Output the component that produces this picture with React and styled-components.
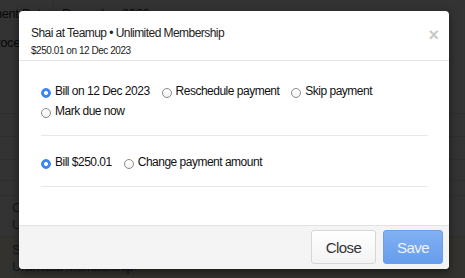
import React from "react";
import styled, { createGlobalStyle } from "styled-components";

const Global = createGlobalStyle`
  html, body { margin: 0; padding: 0; }
  body {
    font-family: "Liberation Sans", Arial, sans-serif;
    background: #fff;
    width: 465px;
    height: 278px;
    overflow: hidden;
  }
`;

const Page = styled.div`
  width: 465px;
  height: 278px;
  position: relative;
  overflow: hidden;
  color: #333;
  font-size: 13px;
  letter-spacing: -0.4px;
`;

const BgRow = styled.div`
  display: flex;
  align-items: center;
  height: ${(p) => p.h}px;
  border-bottom: 1px solid ${(p) => (p.line ? "#e6e6e6" : "transparent")};
  background: ${(p) => p.bg || "transparent"};
  white-space: nowrap;
  overflow: hidden;
`;

const BgCell = styled.div`
  flex: none;
  width: ${(p) => p.w}px;
  text-indent: ${(p) => p.indent || 0}px;
  border-right: ${(p) => (p.divide ? "1px solid #e6e6e6" : "none")};
  align-self: stretch;
  display: flex;
  align-items: ${(p) => (p.top ? "flex-start" : "center")};
  padding-top: ${(p) => (p.top ? 8 : 0)}px;
  padding-left: ${(p) => p.pad || 0}px;
`;

const BgStack = styled.div`
  display: flex;
  flex-direction: column;
  justify-content: center;
  gap: 2px;
  padding-left: 12px;
  align-self: stretch;
  color: #337ab7;
`;

const Backdrop = styled.div`
  position: absolute;
  inset: 0;
  background: rgba(0, 0, 0, 0.8);
`;

const Modal = styled.div`
  position: absolute;
  left: 19px;
  top: 11px;
  width: 430px;
  height: 258px;
  background: #fff;
  border-radius: 4px;
  box-shadow: 0 3px 9px rgba(0, 0, 0, 0.5);
  display: flex;
  flex-direction: column;
  overflow: hidden;
`;

const Header = styled.div`
  height: 50px;
  box-sizing: border-box;
  border-bottom: 1px solid #e5e5e5;
  padding: 14px 12px 0 12px;
  display: flex;
  justify-content: space-between;
  align-items: flex-start;
`;

const Titles = styled.div`
  display: flex;
  flex-direction: column;
`;

const Title = styled.div`
  font-size: 12px;
  letter-spacing: -0.55px;
  line-height: 17px;
  color: #222;
`;

const Sub = styled.div`
  font-size: 10px;
  letter-spacing: -0.45px;
  line-height: 15px;
  margin-top: 1px;
  color: #222;
`;

const CloseX = styled.span`
  font-size: 18px;
  font-weight: bold;
  letter-spacing: 0;
  line-height: 1;
  color: #c8c8c8;
  margin-top: 1px;
  margin-right: -2px;
`;

const Body = styled.div`
  flex: 1;
  padding: 20px 21px 0 22px;
`;

const Section = styled.div`
  display: flex;
  flex-wrap: wrap;
  column-gap: 12px;
  padding: ${(p) => p.pad};
  border-bottom: 1px solid #e8e8e8;
`;

const Option = styled.label`
  display: flex;
  align-items: center;
  gap: 4px;
  height: 20px;
  font-size: 12px;
  letter-spacing: -0.5px;
  color: #111;
`;

const Radio = styled.span`
  width: 10px;
  height: 10px;
  border-radius: 50%;
  box-sizing: border-box;
  margin-top: 3px;
  border: 1px solid ${(p) => (p.checked ? "#3b82f6" : "#8a8a8a")};
  background: ${(p) =>
    p.checked
      ? "radial-gradient(circle, #fff 0 1.7px, #3d86f5 2.3px)"
      : "linear-gradient(#fff, #f2f2f2)"};
`;

const Footer = styled.div`
  height: 44px;
  box-sizing: border-box;
  border-top: 1px solid #e2e2e2;
  background: #f4f4f4;
  display: flex;
  justify-content: flex-end;
  align-items: center;
  gap: 7px;
  padding: 0 6px 1px 0;
`;

const Button = styled.button`
  height: 34px;
  width: ${(p) => p.w}px;
  font-family: "Liberation Sans", Arial, sans-serif;
  font-size: 15px;
  letter-spacing: -0.6px;
  border-radius: 3px;
  border: 1px solid ${(p) => (p.primary ? "#6a9fec" : "#d6d6d6")};
  background: ${(p) =>
    p.primary
      ? "linear-gradient(#82b0f3, #659ded)"
      : "linear-gradient(#ffffff, #f3f3f3)"};
  color: ${(p) => (p.primary ? "#eef4fd" : "#333")};
  padding: 0;
`;

const options1 = [
  { label: "Bill on 12 Dec 2023", checked: true },
  { label: "Reschedule payment" },
  { label: "Skip payment" },
  { label: "Mark due now" },
];

const options2 = [
  { label: "Bill $250.01", checked: true },
  { label: "Change payment amount" },
];

const App = () => {
  return (
    <Page>
      <Global />
      <BgRow h={26}>
        <BgCell w={53} indent={-30} divide>Payment Date</BgCell>
        <BgCell w={300} pad={8}>December 2023</BgCell>
      </BgRow>
      <BgRow h={86} line>
        <BgCell w={60} indent={-12} top>Process</BgCell>
      </BgRow>
      <BgRow h={22} line />
      <BgRow h={22} line />
      <BgRow h={20} line />
      <BgRow h={14} line />
      <BgRow h={40} line>
        <BgStack>
          <span>Cancel</span>
          <span>Unlimited Membership</span>
        </BgStack>
      </BgRow>
      <BgRow h={42} bg="#fcf8e3">
        <BgStack>
          <span>Shai at Teamup</span>
          <span>Unlimited Membership •</span>
        </BgStack>
      </BgRow>
      <Backdrop />
      <Modal>
        <Header>
          <Titles>
            <Title>Shai at Teamup • Unlimited Membership</Title>
            <Sub>$250.01 on 12 Dec 2023</Sub>
          </Titles>
          <CloseX>×</CloseX>
        </Header>
        <Body>
          <Section pad="0 0 14px 0">
            {options1.map((o) => (
              <Option key={o.label}>
                <Radio checked={o.checked} />
                {o.label}
              </Option>
            ))}
          </Section>
          <Section pad="16px 0 14px 0">
            {options2.map((o) => (
              <Option key={o.label}>
                <Radio checked={o.checked} />
                {o.label}
              </Option>
            ))}
          </Section>
        </Body>
        <Footer>
          <Button w={65}>Close</Button>
          <Button w={60} primary>Save</Button>
        </Footer>
      </Modal>
    </Page>
  );
};

export default App;
